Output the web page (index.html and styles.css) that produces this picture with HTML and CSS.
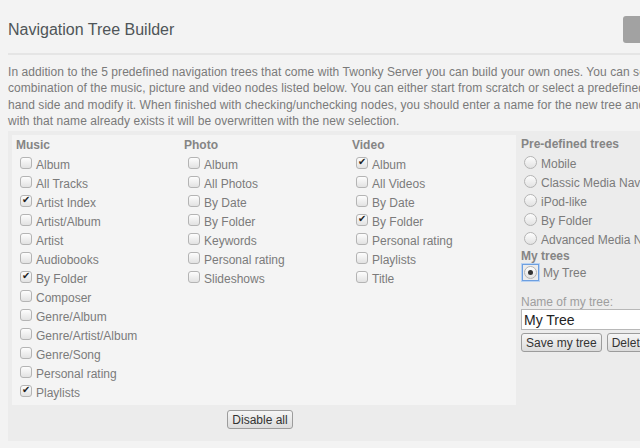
FILE: index.html
```html
<!DOCTYPE html>
<html lang="en">
<head>
  <meta charset="UTF-8">
  <meta name="viewport" content="width=device-width, initial-scale=1.0">
  <title>Navigation Tree Builder</title>
  <link rel="stylesheet" href="styles.css">
</head>
<body>
  <div class="page">
    <div class="header">
      <h1>Navigation Tree Builder</h1>
      <button class="top-button" title="Save changes"></button>
    </div>

    <p class="intro">
      In addition to the 5 predefined navigation trees that come with Twonky Server you can build your own ones. You can select any<br>
      combination of the music, picture and video nodes listed below. You can either start from scratch or select a predefined tree on the right<br>
      hand side and modify it. When finished with checking/unchecking nodes, you should enter a name for the new tree and save it. If a tree<br>
      with that name already exists it will be overwritten with the new selection.
    </p>

    <div class="builder">
      <div class="left">
        <div class="tree-box">
          <div class="column">
            <div class="col-title">Music</div>
            <label class="item"><input type="checkbox"> Album</label>
            <label class="item"><input type="checkbox"> All Tracks</label>
            <label class="item"><input type="checkbox" checked> Artist Index</label>
            <label class="item"><input type="checkbox"> Artist/Album</label>
            <label class="item"><input type="checkbox"> Artist</label>
            <label class="item"><input type="checkbox"> Audiobooks</label>
            <label class="item"><input type="checkbox" checked> By Folder</label>
            <label class="item"><input type="checkbox"> Composer</label>
            <label class="item"><input type="checkbox"> Genre/Album</label>
            <label class="item"><input type="checkbox"> Genre/Artist/Album</label>
            <label class="item"><input type="checkbox"> Genre/Song</label>
            <label class="item"><input type="checkbox"> Personal rating</label>
            <label class="item"><input type="checkbox" checked> Playlists</label>
          </div>
          <div class="column">
            <div class="col-title">Photo</div>
            <label class="item"><input type="checkbox"> Album</label>
            <label class="item"><input type="checkbox"> All Photos</label>
            <label class="item"><input type="checkbox"> By Date</label>
            <label class="item"><input type="checkbox"> By Folder</label>
            <label class="item"><input type="checkbox"> Keywords</label>
            <label class="item"><input type="checkbox"> Personal rating</label>
            <label class="item"><input type="checkbox"> Slideshows</label>
          </div>
          <div class="column">
            <div class="col-title">Video</div>
            <label class="item"><input type="checkbox" checked> Album</label>
            <label class="item"><input type="checkbox"> All Videos</label>
            <label class="item"><input type="checkbox"> By Date</label>
            <label class="item"><input type="checkbox" checked> By Folder</label>
            <label class="item"><input type="checkbox"> Personal rating</label>
            <label class="item"><input type="checkbox"> Playlists</label>
            <label class="item"><input type="checkbox"> Title</label>
          </div>
        </div>
        <div class="left-actions">
          <button class="btn">Disable all</button>
        </div>
      </div>

      <div class="right">
        <div class="col-title">Pre-defined trees</div>
        <label class="item"><input type="radio" name="tree"> Mobile</label>
        <label class="item"><input type="radio" name="tree"> Classic Media Navigation</label>
        <label class="item"><input type="radio" name="tree"> iPod-like</label>
        <label class="item"><input type="radio" name="tree"> By Folder</label>
        <label class="item"><input type="radio" name="tree"> Advanced Media Navigation</label>
        <div class="col-title short">My trees</div>
        <label class="item"><span class="focus-ring"><input type="radio" name="tree" checked></span> My Tree</label>

        <label class="name-label" for="treeName">Name of my tree:</label>
        <input type="text" id="treeName" class="name-input" value="My Tree">
        <div class="right-actions">
          <button class="btn">Save my tree</button>
          <button class="btn">Delete my tree</button>
        </div>
      </div>
    </div>
  </div>
</body>
</html>
```

FILE: styles.css
```css
* {
  margin: 0;
  padding: 0;
  box-sizing: border-box;
}
html, body {
  overflow: hidden;
}
body {
  font-family: 'Liberation Sans', Arial, sans-serif;
  font-size: 12px;
  background-color: #f3f3f3;
  color: #777;
}
.page {
  width: 900px;
  padding: 0 8px;
}
.header {
  position: relative;
  height: 55px;
  padding-top: 20px;
  border-bottom: 2px solid #e5e5e5;
}
.header h1 {
  font-family: 'Liberation Sans Narrow', 'Liberation Sans', Arial, sans-serif;
  font-size: 16px;
  line-height: 19px;
  font-weight: normal;
  color: #4f5558;
}
.top-button {
  position: absolute;
  left: 615px;
  top: 16px;
  width: 60px;
  height: 27px;
  border: none;
  border-radius: 3px;
  background-color: #a2a2a2;
}
.intro {
  margin-top: 9px;
  margin-bottom: 2px;
  line-height: 16.3px;
  letter-spacing: 0.06px;
  white-space: nowrap;
  color: #7a7a7a;
}
.builder {
  display: grid;
  grid-template-columns: 504px 1fr;
  background-color: #ececec;
  padding: 4px 0 12px 4px;
}
.tree-box {
  display: grid;
  grid-template-columns: 168px 168px 1fr;
  background-color: #f4f4f4;
  padding: 1px 0 3px 4px;
  height: 270px;
}
.column {
  display: flex;
  flex-direction: column;
}
.col-title {
  height: 19px;
  line-height: 19px;
  font-weight: bold;
  color: #858585;
}
.col-title.short {
  height: 14px;
  line-height: 14px;
}
.item {
  display: flex;
  align-items: center;
  height: 19px;
  padding-left: 4px;
  gap: 4px;
  white-space: nowrap;
  color: #7b7b7b;
}
input[type="checkbox"], input[type="radio"] {
  appearance: none;
  width: 12px;
  height: 12px;
  margin: 0 0 3px 0;
  border: 1px solid #b4b4b4;
  background: linear-gradient(#fdfdfd, #e2e2e2);
  position: relative;
  flex: none;
}
input[type="checkbox"] {
  border-radius: 3px;
}
input[type="checkbox"]:checked::after {
  content: "\2714";
  position: absolute;
  left: 1px;
  top: -2px;
  font-size: 10px;
  color: #222;
}
input[type="radio"] {
  border-radius: 50%;
  width: 13px;
  height: 13px;
}
input[type="radio"]:checked::after {
  content: "";
  position: absolute;
  left: 3px;
  top: 3px;
  width: 5px;
  height: 5px;
  border-radius: 50%;
  background-color: #333;
}
.focus-ring {
  display: flex;
  padding: 1px;
  margin: -1px 0 0 -2px;
  border: 1px solid #6d9fe0;
  box-shadow: 0 0 0 1px #b9d2f2;
}
.focus-ring input[type="radio"] {
  margin: 0;
}
.left-actions {
  display: flex;
  justify-content: center;
  padding: 5px 8px 0 0;
}
.btn {
  height: 19px;
  padding: 0 4px;
  border: 1px solid #9c9c9c;
  border-radius: 3px;
  background: linear-gradient(#f6f6f6, #dcdcdc);
  font-family: inherit;
  font-size: 12px;
  color: #333;
}
.right {
  display: flex;
  flex-direction: column;
  padding-left: 5px;
}
.right .item {
  padding-left: 3px;
}
.name-label {
  margin-top: 12px;
  line-height: 16px;
  color: #9e9e9e;
}
.name-input {
  height: 21px;
  width: 200px;
  margin-top: -1px;
  padding: 0 2px;
  border: 1px solid #b8b8b8;
  background-color: #fff;
  font-family: inherit;
  font-size: 14px;
  color: #222;
}
.right-actions {
  display: flex;
  gap: 5px;
  margin-top: 3px;
}
```
